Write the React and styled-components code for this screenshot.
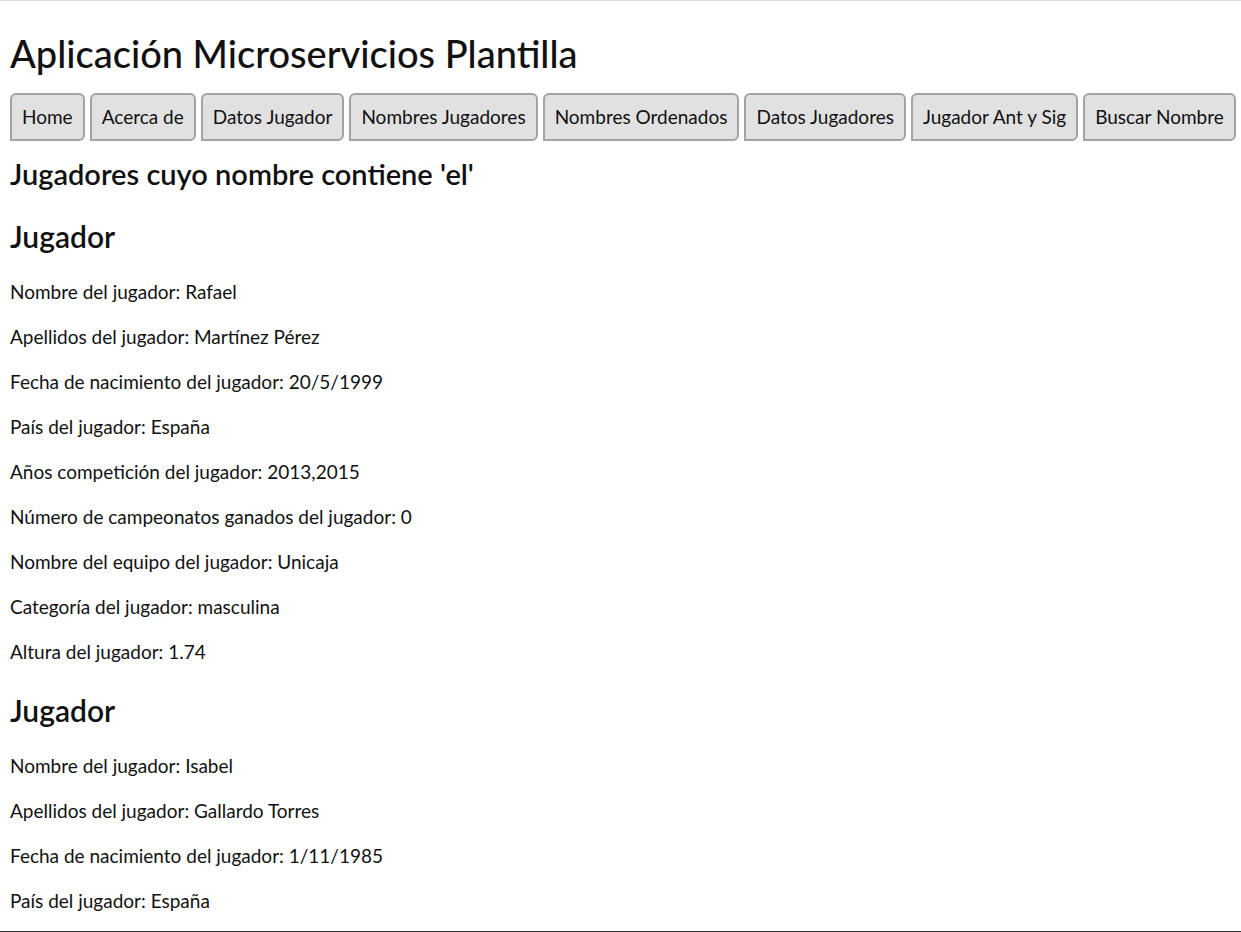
import React from 'react'
import styled, { createGlobalStyle } from 'styled-components'

const GlobalStyle = createGlobalStyle`
  html, body {
    margin: 0;
    padding: 0;
    background: #fff;
  }
  body {
    font-family: Lato, "Noto Sans", sans-serif;
    color: #111;
  }
`

const menu = [
  'Home',
  'Acerca de',
  'Datos Jugador',
  'Nombres Jugadores',
  'Nombres Ordenados',
  'Datos Jugadores',
  'Jugador Ant y Sig',
  'Buscar Nombre',
]

const players = [
  [
    ['Nombre del jugador', 'Rafael'],
    ['Apellidos del jugador', 'Martínez Pérez'],
    ['Fecha de nacimiento del jugador', '20/5/1999'],
    ['País del jugador', 'España'],
    ['Años competición del jugador', '2013,2015'],
    ['Número de campeonatos ganados del jugador', '0'],
    ['Nombre del equipo del jugador', 'Unicaja'],
    ['Categoría del jugador', 'masculina'],
    ['Altura del jugador', '1.74'],
  ],
  [
    ['Nombre del jugador', 'Isabel'],
    ['Apellidos del jugador', 'Gallardo Torres'],
    ['Fecha de nacimiento del jugador', '1/11/1985'],
    ['País del jugador', 'España'],
  ],
]

export default function App() {
  return (
    <Frame>
      <GlobalStyle />
      <Page>
        <Title>Aplicación Microservicios Plantilla</Title>
        <Nav>
          {menu.map(m => (
            <NavButton key={m}>{m}</NavButton>
          ))}
        </Nav>
        <SearchTitle>Jugadores cuyo nombre contiene 'el'</SearchTitle>
        {players.map((p, i) => (
          <Player key={i}>
            <PlayerTitle>Jugador</PlayerTitle>
            {p.map(([k, v]) => (
              <Field key={k}>{k}: {v}</Field>
            ))}
          </Player>
        ))}
      </Page>
    </Frame>
  )
}

const Frame = styled.div`
  height: 932px;
  box-sizing: border-box;
  overflow: hidden;
  border-top: 1px solid #dcdcdc;
  border-bottom: 1px solid #333;
`

const Page = styled.div`
  padding: 0 10px;
`

const Title = styled.h1`
  font-size: 38px;
  font-weight: 500;
  margin: 30px 0 16px;
  line-height: 1.2;
`

const Nav = styled.div`
  display: flex;
  gap: 5px;
`

const NavButton = styled.button`
  flex-shrink: 0;
  white-space: nowrap;
  height: 48px;
  padding: 0 10px;
  font-family: inherit;
  font-size: 19px;
  color: #111;
  background: #e1e1e1;
  border: 2px solid #a3a3a3;
  border-radius: 6px 6px 6px 0;
`

const SearchTitle = styled.h3`
  font-size: 29px;
  font-weight: 600;
  margin: 16px 0 0;
  line-height: 34px;
`

const Player = styled.section`
  display: block;
`

const PlayerTitle = styled.h2`
  font-size: 30px;
  font-weight: 600;
  margin: 27px 0 25px;
  line-height: 36px;
`

const Field = styled.p`
  font-size: 19px;
  margin: 19px 0;
  line-height: 26px;
`
